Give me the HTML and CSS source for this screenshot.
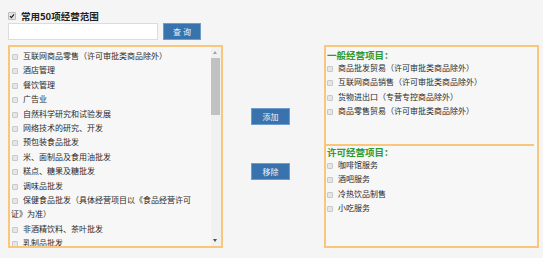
FILE: index.html
```html
<!DOCTYPE html>
<html>
<head>
    <meta charset="utf-8" />
    <title>经营范围</title>
    <link rel="stylesheet" href="styles.css">
</head>
<body>
<div class="page">
    <!-- header -->
    <div class="head">
        <span class="cb-on"><svg width="6" height="6" viewBox="0 0 6 6"><path d="M1 3.2 L2.4 4.6 L5 1.3" fill="none" stroke="#222" stroke-width="1.2"/></svg></span>
        <span class="head-title">常用50项经营范围</span>
    </div>
    <div class="search">
        <input class="search-input" type="text" />
        <button class="btn btn-query">查 询</button>
    </div>

    <div class="picker">
        <!-- available -->
        <div class="pick-box pick-list">
            <div class="pick-scroll">
                <label class="item"><input type="checkbox" />互联网商品零售（许可审批类商品除外）</label>
                <label class="item"><input type="checkbox" />酒店管理</label>
                <label class="item"><input type="checkbox" />餐饮管理</label>
                <label class="item"><input type="checkbox" />广告业</label>
                <label class="item"><input type="checkbox" />自然科学研究和试验发展</label>
                <label class="item"><input type="checkbox" />网络技术的研究、开发</label>
                <label class="item"><input type="checkbox" />预包装食品批发</label>
                <label class="item"><input type="checkbox" />米、面制品及食用油批发</label>
                <label class="item"><input type="checkbox" />糕点、糖果及糖批发</label>
                <label class="item"><input type="checkbox" />调味品批发</label>
                <label class="item"><input type="checkbox" />保健食品批发（具体经营项目以《食品经营许可证》为准）</label>
                <label class="item"><input type="checkbox" />非酒精饮料、茶叶批发</label>
                <label class="item"><input type="checkbox" />乳制品批发</label>
            </div>
            <div class="scrollbar">
                <span class="sb-up"></span>
                <span class="sb-thumb"></span>
                <span class="sb-down"></span>
            </div>
        </div>

        <div class="pick-ops">
            <button class="btn btn-op">添加</button>
            <button class="btn btn-op">移除</button>
        </div>

        <!-- chosen -->
        <div class="pick-box pick-chosen">
            <div class="group group-general">
                <div class="group-title">一般经营项目：</div>
                <label class="item"><input type="checkbox" />商品批发贸易（许可审批类商品除外）</label>
                <label class="item"><input type="checkbox" />互联网商品销售（许可审批类商品除外）</label>
                <label class="item"><input type="checkbox" />货物进出口（专营专控商品除外）</label>
                <label class="item"><input type="checkbox" />商品零售贸易（许可审批类商品除外）</label>
            </div>
            <div class="group group-licensed">
                <div class="group-title">许可经营项目：</div>
                <label class="item"><input type="checkbox" />咖啡馆服务</label>
                <label class="item"><input type="checkbox" />酒吧服务</label>
                <label class="item"><input type="checkbox" />冷热饮品制售</label>
                <label class="item"><input type="checkbox" />小吃服务</label>
            </div>
        </div>
    </div>
</div>
</body>
</html>
```

FILE: styles.css
```css
body {
    margin: 0;
    background: #fff;
    font-family: "Noto Sans CJK SC", "Noto Sans", sans-serif;
    color: #333;
}
.page {
    width: 543px;
    height: 258px;
    box-sizing: border-box;
    padding: 10px 0 0 8px;
    background: #f5f5f5;
}
.head {
    display: flex;
    align-items: center;
    height: 12px;
}
.cb-on {
    display: inline-flex;
    align-items: center;
    justify-content: center;
    width: 6px;
    height: 6px;
    border: 1px solid #bdbdbd;
    background: #e4e4e4;
    border-radius: 1px;
    margin-right: 5px;
}
.head-title {
    font-size: 9.5px;
    font-weight: bold;
    color: #222;
    line-height: 12px;
}
.search {
    display: flex;
    align-items: center;
    margin-top: 1px;
}
.search-input {
    width: 150px;
    height: 17px;
    box-sizing: border-box;
    margin: 0;
    border: 1px solid #dcdcdc;
    background: #fff;
    padding: 0 4px;
}
.btn {
    margin: 0;
    padding: 0;
    font-family: inherit;
    font-size: 8px;
    color: #eef3f8;
    background: #3873ad;
    border: 1px solid #6d9dd0;
    box-sizing: border-box;
    cursor: pointer;
}
.btn-query {
    width: 38px;
    height: 17px;
    margin-left: 5px;
}
.picker {
    display: flex;
    margin-top: 5px;
}
.pick-box {
    width: 215px;
    height: 203px;
    box-sizing: border-box;
    border: 2px solid #f9c67c;
    background: #f7f7f7;
}
.item {
    display: block;
    font-size: 8px;
    line-height: 14.4px;
    color: #2a2a2a;
}
.item input {
    -webkit-appearance: none;
    appearance: none;
    width: 6px;
    height: 6px;
    margin: 0 5px 0 1px;
    border: 1px solid #c8c8c8;
    border-radius: 1px;
    background: #e6e6e6;
    vertical-align: -1px;
}
.pick-list {
    position: relative;
    overflow: hidden;
}
.pick-scroll {
    padding: 2px 26px 0 1px;
}
/* drawn scrollbar, the page is shot with native ones hidden */
.scrollbar {
    position: absolute;
    top: 0;
    right: 0;
    bottom: 0;
    width: 10px;
    background: #f1f1f1;
}
.sb-up, .sb-down {
    position: absolute;
    left: 2px;
    width: 0;
    height: 0;
    border-left: 2.5px solid transparent;
    border-right: 2.5px solid transparent;
}
.sb-up {
    top: 4px;
    border-bottom: 3px solid #a3a3a3;
}
.sb-down {
    bottom: 4px;
    border-top: 3px solid #505050;
}
.sb-thumb {
    position: absolute;
    top: 11px;
    left: 0;
    width: 9px;
    height: 57px;
    background: #c1c1c1;
}
.pick-ops {
    width: 101px;
    box-sizing: border-box;
    display: flex;
    flex-direction: column;
    align-items: flex-start;
    gap: 38px;
    padding: 63px 0 0 28px;
}
.btn-op {
    width: 39px;
    height: 17px;
}
.pick-chosen {
    padding: 0 3px 0 0;
}
.group {
    padding-left: 1px;
}
.group-general {
    height: 97px;
    box-sizing: border-box;
    padding-top: 2px;
}
.group-licensed {
    border-top: 2px solid #f9c67c;
}
.group-title {
    font-size: 9.5px;
    font-weight: bold;
    line-height: 12px;
    color: #2f9a2f;
}
.group .item input {
    margin-left: 0;
}
```
